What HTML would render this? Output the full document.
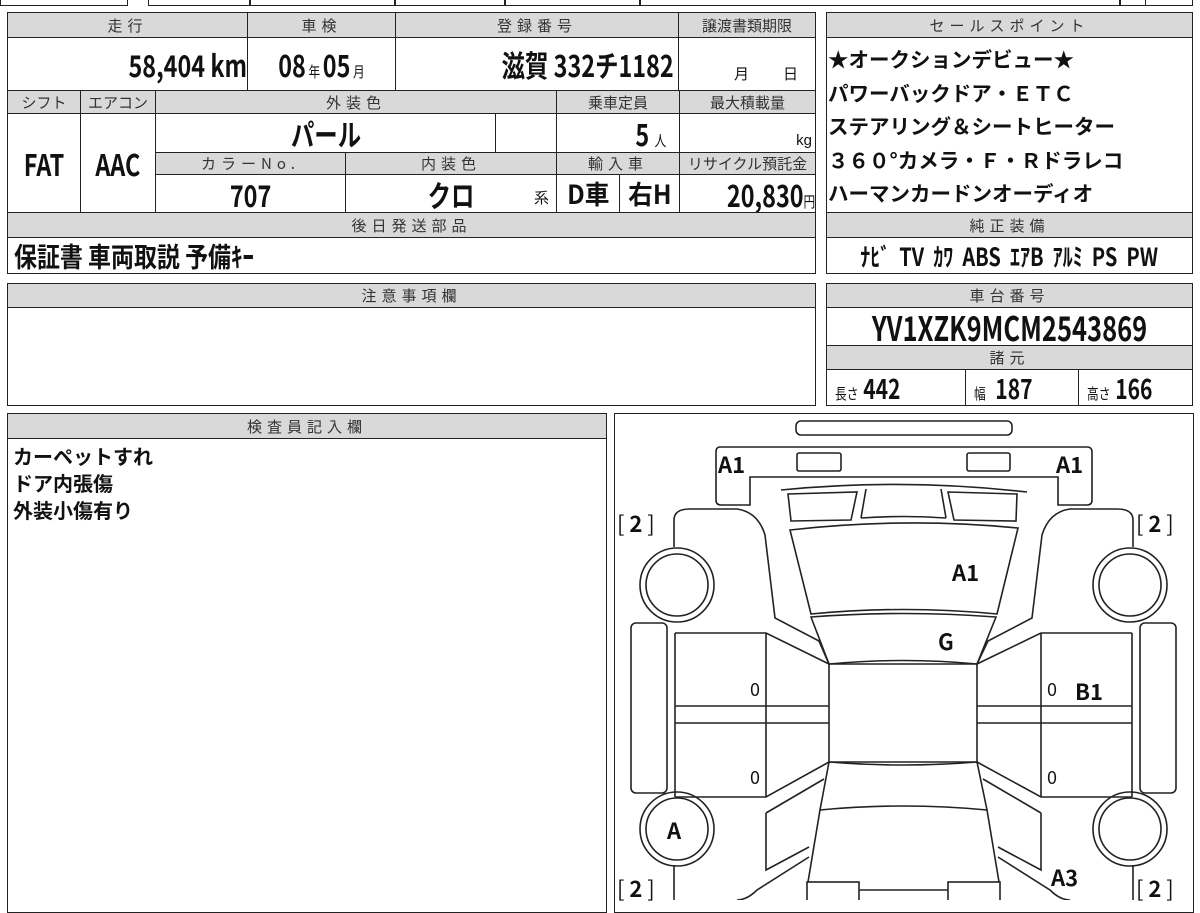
<!DOCTYPE html>
<html><head><meta charset="utf-8"><style>
body{margin:0;width:1200px;height:900px;overflow:hidden;background:#fff;position:relative;font-family:"Liberation Sans","Noto Sans CJK JP",sans-serif;color:#111}
.c{position:absolute;border:1.5px solid #222;box-sizing:border-box;display:flex;align-items:center;justify-content:center;white-space:nowrap;overflow:hidden}
.h{background:#d9d9d9;font-size:15px;letter-spacing:5px;color:#333;font-family:"Noto Sans CJK JP",sans-serif}
.v>span{display:inline-block;font-weight:bold;font-family:"Noto Sans CJK JP",sans-serif;transform:scaleX(.78);font-size:30px}
.v .s{font-size:15px;font-weight:normal}
.t{position:absolute;font-weight:bold;font-family:"Noto Sans CJK JP",sans-serif;white-space:nowrap;line-height:1}
</style></head><body>
<!-- top strip -->
<div class="c" style="left:0;top:-10px;width:128px;height:16px"></div>
<div class="c" style="left:148px;top:-10px;width:102px;height:16px"></div>
<div class="c" style="left:250px;top:-10px;width:145px;height:16px"></div>
<div class="c" style="left:395px;top:-10px;width:110px;height:16px"></div>
<div class="c" style="left:505px;top:-10px;width:135px;height:16px"></div>
<div class="c" style="left:640px;top:-10px;width:480px;height:16px"></div>
<div class="c" style="left:1120px;top:-10px;width:26px;height:16px"></div>
<div class="c" style="left:1145px;top:-10px;width:48px;height:16px"></div>

<!-- main table -->
<div class="c h" style="left:7px;top:12px;width:241px;height:26px">走行</div>
<div class="c h" style="left:247px;top:12px;width:149px;height:26px">車検</div>
<div class="c h" style="left:395px;top:12px;width:284px;height:26px">登録番号</div>
<div class="c h" style="left:678px;top:12px;width:138px;height:26px;letter-spacing:0">譲渡書類期限</div>
<div class="c v" style="left:7px;top:37px;width:241px;height:54px;justify-content:flex-end"><span style="transform-origin:right">58,404 km</span></div>
<div class="c v" style="left:247px;top:37px;width:149px;height:54px"><span>08<span class="s"> 年 </span>05<span class="s"> 月</span></span></div>
<div class="c v" style="left:395px;top:37px;width:284px;height:54px;justify-content:flex-end"><span style="transform-origin:right;margin-right:4px">滋賀 332チ1182</span></div>
<div class="c" style="left:678px;top:37px;width:138px;height:54px;align-items:flex-end;padding-bottom:6px;font-size:15px;justify-content:space-around">&nbsp;<span>月</span><span>日</span></div>

<div class="c h" style="left:7px;top:90px;width:74px;height:24px;letter-spacing:0">シフト</div>
<div class="c h" style="left:80px;top:90px;width:76px;height:24px;letter-spacing:0">エアコン</div>
<div class="c h" style="left:155px;top:90px;width:402px;height:24px">外装色</div>
<div class="c h" style="left:556px;top:90px;width:124px;height:24px;letter-spacing:0">乗車定員</div>
<div class="c h" style="left:679px;top:90px;width:137px;height:24px;letter-spacing:0">最大積載量</div>
<div class="c v" style="left:7px;top:113px;width:74px;height:100px"><span>FAT</span></div>
<div class="c v" style="left:80px;top:113px;width:76px;height:100px"><span>AAC</span></div>
<div class="c v" style="left:155px;top:113px;width:341px;height:40px"><span>パール</span></div>
<div class="c" style="left:495px;top:113px;width:62px;height:40px"></div>
<div class="c v" style="left:556px;top:113px;width:124px;height:40px;justify-content:flex-end;padding-right:8px"><span>5 <span class="s">人</span></span></div>
<div class="c" style="left:679px;top:113px;width:137px;height:40px;justify-content:flex-end;align-items:flex-end;padding:0 3px 3px 0;font-size:15px">kg</div>
<div class="c h" style="left:155px;top:152px;width:191px;height:23px">カラーNo.</div>
<div class="c h" style="left:345px;top:152px;width:212px;height:23px">内装色</div>
<div class="c h" style="left:556px;top:152px;width:124px;height:23px">輸入車</div>
<div class="c h" style="left:679px;top:152px;width:137px;height:23px;letter-spacing:0">リサイクル預託金</div>
<div class="c v" style="left:155px;top:174px;width:191px;height:39px"><span>707</span></div>
<div class="c v" style="left:345px;top:174px;width:212px;height:39px"><span>クロ</span></div>
<div class="t" style="left:534px;top:190px;font-size:15px;font-weight:normal">系</div>
<div class="c v" style="left:556px;top:174px;width:64px;height:39px"><span style="transform:scaleX(.95);font-size:26px">D車</span></div>
<div class="c v" style="left:619px;top:174px;width:61px;height:39px"><span style="transform:scaleX(.95);font-size:26px">右H</span></div>
<div class="c v" style="left:679px;top:174px;width:137px;height:39px;justify-content:flex-end"><span style="transform-origin:right">20,830<span class="s">円</span></span></div>
<div class="c h" style="left:7px;top:212px;width:809px;height:26px">後日発送部品</div>
<div class="c v" style="left:7px;top:237px;width:809px;height:37px;justify-content:flex-start;padding-left:6px"><span style="transform-origin:left;font-size:27px;transform:scaleX(.85)">保証書 車両取説 予備ｷｰ</span></div>

<!-- sales points -->
<div class="c" style="left:826px;top:12px;width:367px;height:262px"></div>
<div class="c h" style="left:826px;top:12px;width:367px;height:26px">セールスポイント</div>
<div class="t" style="left:828px;top:42px;font-size:20.5px;line-height:33.5px">★オークションデビュー★<br>パワーバックドア・ＥＴＣ<br>ステアリング＆シートヒーター<br>３６０°カメラ・Ｆ・Ｒドラレコ<br>ハーマンカードンオーディオ</div>
<div class="c h" style="left:826px;top:212px;width:367px;height:26px">純正装備</div>
<div class="c v" style="left:826px;top:237px;width:367px;height:37px"><span style="font-size:25px;transform:scaleX(.8)">ﾅﾋﾞ&nbsp; TV&nbsp; ｶﾜ&nbsp; ABS&nbsp; ｴｱB&nbsp; ｱﾙﾐ&nbsp; PS&nbsp; PW</span></div>

<!-- caution -->
<div class="c" style="left:7px;top:283px;width:809px;height:123px"></div>
<div class="c h" style="left:7px;top:283px;width:809px;height:25px">注意事項欄</div>

<!-- VIN -->
<div class="c" style="left:826px;top:283px;width:367px;height:123px"></div>
<div class="c h" style="left:826px;top:283px;width:367px;height:25px">車台番号</div>
<div class="c v" style="left:826px;top:307px;width:367px;height:39px"><span style="font-size:34px;transform:scaleX(.75)">YV1XZK9MCM2543869</span></div>
<div class="c h" style="left:826px;top:345px;width:367px;height:25px">諸元</div>
<div class="c v" style="left:826px;top:369px;width:140px;height:37px;justify-content:flex-start;padding-left:8px"><span style="transform-origin:left;font-size:27px"><span class="s">長さ</span> 442</span></div>
<div class="c v" style="left:965px;top:369px;width:114px;height:37px;justify-content:flex-start;padding-left:8px"><span style="transform-origin:left;font-size:27px"><span class="s">幅</span> &nbsp;187</span></div>
<div class="c v" style="left:1078px;top:369px;width:115px;height:37px;justify-content:flex-start;padding-left:8px"><span style="transform-origin:left;font-size:27px"><span class="s">高さ</span> 166</span></div>

<!-- inspector -->
<div class="c" style="left:7px;top:413px;width:600px;height:500px"></div>
<div class="c h" style="left:7px;top:413px;width:600px;height:26px">検査員記入欄</div>
<div class="t" style="left:13px;top:442px;font-size:20px;line-height:27px">カーペットすれ<br>ドア内張傷<br>外装小傷有り</div>

<!-- diagram -->
<div class="c" style="left:614px;top:413px;width:580px;height:500px"></div>
<svg style="position:absolute;left:0;top:0" width="1200" height="900" fill="none" stroke="#222" stroke-width="1.6">
<rect x="796" y="421" width="216" height="14" rx="5"/>
<path d="M720 447H1087Q1092 447 1092 452V500Q1092 505 1087 505H1058V477H750V505H721Q716 505 716 500V452Q716 447 720 447Z"/>
<rect x="797" y="453" width="44" height="18" rx="2"/><rect x="967" y="453" width="43" height="18" rx="2"/>
<path d="M781 490Q904 478 1027 492"/>
<path d="M788 494L857 492L851 520L791 521Z"/><path d="M948 492L1017 494L1016 521L954 520Z"/>
<path d="M861 518L866 489M946 518L941 489M861 518Q904 515 946 518"/>
<path d="M790 530Q904 517 1018 528L997 614Q904 605 811 614Z"/>
<path d="M811 617Q904 610 996 617L977 664Q904 657 829 664Z"/>
<path d="M829 664H977V762H829Z"/>
<path d="M829 762Q904 768 977 762L987 810Q904 802 820 810Z"/>
<path d="M820 810L808 882M987 810L999 882"/>
<rect x="807" y="882" width="52" height="30"/><rect x="948" y="882" width="52" height="30"/><path d="M859 890H948"/>
<!-- fenders -->
<path d="M674 547V520Q674 509 690 509H737Q758 512 765 535L775 618L819 641L829 664"/>
<path d="M1133 547V520Q1133 509 1117 509H1070Q1049 512 1042 535L1032 618L988 641L977 664"/>
<circle cx="677" cy="585" r="37"/><circle cx="677" cy="585" r="31"/>
<circle cx="1130" cy="585" r="37"/><circle cx="1130" cy="585" r="31"/>
<circle cx="677" cy="829" r="37"/><circle cx="677" cy="829" r="31"/>
<circle cx="1130" cy="829" r="37"/><circle cx="1130" cy="829" r="31"/>
<rect x="631" y="623" width="36" height="170" rx="5"/><rect x="1140" y="623" width="36" height="170" rx="5"/>
<path d="M674 865V900M1133 865V900"/>
<!-- doors -->
<path d="M675 633H766L829 664M675 797H766L829 762M766 633V797M675 706H829M675 723H829M675 633V797"/>
<path d="M1132 633H1041L977 664M1132 797H1041L977 762M1041 633V797M1132 706H977M1132 723H977M1132 633V797"/>
<!-- rear sides -->
<path d="M766 813V870L809 847M766 813L824 779"/>
<path d="M1041 813V870L998 847M1041 813L983 779"/>
<path d="M998 857L1050 890Q1060 900 1070 900"/><path d="M809 857L757 890Q747 900 737 900"/>
</svg>
<div class="t" style="left:718px;top:453px;font-size:22px">A1</div>
<div class="t" style="left:1056px;top:453px;font-size:22px">A1</div>
<div class="t" style="left:952px;top:561px;font-size:22px">A1</div>
<div class="t" style="left:938px;top:630px;font-size:22px">G</div>
<div class="t" style="left:1075px;top:680px;font-size:22px">B1</div>
<div class="t" style="left:667px;top:819px;font-size:22px">A</div>
<div class="t" style="left:1051px;top:866px;font-size:22px">A3</div>
<div class="t" style="left:750px;top:680px;font-size:18px;font-weight:normal">0</div>
<div class="t" style="left:750px;top:768px;font-size:18px;font-weight:normal">0</div>
<div class="t" style="left:1047px;top:680px;font-size:18px;font-weight:normal">0</div>
<div class="t" style="left:1047px;top:768px;font-size:18px;font-weight:normal">0</div>
<div class="t" style="left:617px;top:512px;font-size:22px;font-weight:normal">[ <b>2</b> ]</div>
<div class="t" style="left:1136px;top:512px;font-size:22px;font-weight:normal">[ <b>2</b> ]</div>
<div class="t" style="left:617px;top:877px;font-size:22px;font-weight:normal">[ <b>2</b> ]</div>
<div class="t" style="left:1136px;top:877px;font-size:22px;font-weight:normal">[ <b>2</b> ]</div>
</body></html>
